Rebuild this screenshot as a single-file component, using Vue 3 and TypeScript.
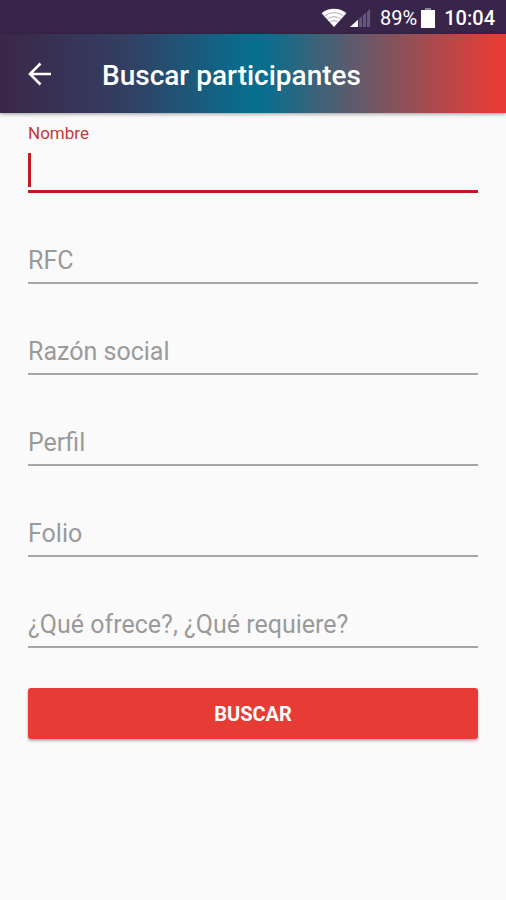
<script setup lang="ts">
import { reactive, ref } from 'vue'

interface Field {
  id: string
  label: string
}

const fields: Field[] = [
  { id: 'nombre', label: 'Nombre' },
  { id: 'rfc', label: 'RFC' },
  { id: 'razon-social', label: 'Razón social' },
  { id: 'perfil', label: 'Perfil' },
  { id: 'folio', label: 'Folio' },
  { id: 'oferta', label: '¿Qué ofrece?, ¿Qué requiere?' },
]

const values = reactive<Record<string, string>>(
  Object.fromEntries(fields.map((field) => [field.id, ''])),
)
const active = ref('nombre')
</script>

<template>
  <div class="screen">
    <div class="status">
      <svg class="wifi" viewBox="0 0 26 20" aria-hidden="true">
        <path d="M13 19 0.6 5.2C7.500-.6 18.500-.6 25.400 5.200Z" fill="#fff" />
        <path d="M3.500 8.200C9 3.600 17 3.600 22.500 8.200M6.300 11.200C10.300 7.900 15.700 7.900 19.700 11.200M9 14.200C11.500 12.200 14.500 12.200 17 14.200" fill="none" stroke="#9a93a8" stroke-width="0.8" />
      </svg>
      <svg class="signal" viewBox="0 0 22 20" aria-hidden="true">
        <path d="M1 19 21 1V19Z" fill="#65597a" />
        <path d="M1 19 9 11.800V19Z" fill="#fff" />
        <path d="M9.500 10V19M13.500 6V19M17.500 3V19" stroke="#3b2850" stroke-width="1" />
      </svg>
      <span class="percent">89%</span>
      <svg class="battery" viewBox="0 0 14 20" aria-hidden="true">
        <path d="M0 2H14V20H0Z" fill="#fff" />
        <path d="M4 0H10V2H4Z" fill="#8d849b" />
      </svg>
      <span class="clock">10:04</span>
    </div>

    <header class="bar">
      <button class="back" type="button" aria-label="Volver">
        <svg viewBox="0 0 24 24" aria-hidden="true">
          <path d="M23 12H2M12.500 1.500 2 12 12.500 22.500" fill="none" stroke="#fff" stroke-width="2.600" />
        </svg>
      </button>
      <h1>Buscar participantes</h1>
    </header>

    <form class="form" @submit.prevent>
      <div
        v-for="field in fields"
        :key="field.id"
        class="field"
        :class="{ active: active === field.id, filled: values[field.id] }"
      >
        <label :for="field.id">{{ field.label }}</label>
        <input :id="field.id" v-model="values[field.id]" type="text" autocomplete="off" @focus="active = field.id" />
        <span v-if="active === field.id && !values[field.id]" class="caret" aria-hidden="true"></span>
      </div>
      <button class="submit" type="submit">BUSCAR</button>
    </form>
  </div>
</template>

<style>
body {
  background: #fafafa;
}
</style>

<style scoped>
.screen {
  min-height: 100vh;
  background: #fafafa;
  font-family: Roboto, "Liberation Sans", sans-serif;
}

.status {
  display: flex;
  align-items: center;
  justify-content: flex-end;
  height: 34px;
  padding: 2px 11px 0 0;
  box-sizing: border-box;
  background: #392549;
  color: #fff;
  font-size: 20px;
}

.wifi {
  width: 26px;
  height: 20px;
  margin-right: 2px;
}

.signal {
  width: 22px;
  height: 20px;
  margin-right: 9px;
}

.battery {
  width: 14px;
  height: 20px;
  margin: 0 9px 0 4px;
}

.clock {
  font-weight: 500;
}

.bar {
  display: flex;
  align-items: center;
  height: 79px;
  padding: 0 28px;
  box-sizing: border-box;
  background: linear-gradient(90deg, #3b2748 0%, #333f63 25%, #086e8e 49%, #086e8e 52%, #e73c36 98%);
  box-shadow: 0 1px 4px rgba(0, 0, 0, 0.4);
}

.back {
  display: flex;
  margin: 0 50px 0 0;
  padding: 0;
  border: 0;
  background: none;
  cursor: pointer;
}

.back svg {
  width: 24px;
  height: 24px;
}

h1 {
  margin: 0;
  padding-top: 4px;
  color: #fff;
  font-size: 28px;
  line-height: 32px;
  font-weight: 500;
}

.form {
  padding: 10px 28px 28px;
}

.field {
  position: relative;
  display: grid;
  grid-template-rows: 24px 46px;
  margin-bottom: 21px;
}

label {
  grid-area: 2 / 1;
  align-self: center;
  color: #9a9a9a;
  font-size: 25px;
  line-height: 30px;
  pointer-events: none;
}

input {
  grid-area: 2 / 1;
  width: 100%;
  min-width: 0;
  box-sizing: border-box;
  padding: 0;
  border: 0;
  border-bottom: 2px solid #a6a6a6;
  border-radius: 0;
  outline: none;
  background: none;
  color: #333;
  font: inherit;
  font-size: 25px;
  caret-color: #c21b20;
}

.active label,
.filled label {
  grid-area: 1 / 1;
  align-self: start;
  font-size: 17px;
  line-height: 20px;
}

.active label {
  color: #c5383b;
}

.active input {
  border-bottom: 3px solid #be1c20;
}

.caret {
  position: absolute;
  left: 0;
  bottom: 6px;
  width: 3px;
  height: 34px;
  background: #c21b20;
  pointer-events: none;
}

.submit {
  display: block;
  width: 100%;
  height: 51px;
  margin-top: 40px;
  padding: 0;
  border: 0;
  border-radius: 3px;
  background: #e73b36;
  box-shadow: 0 2px 3px rgba(0, 0, 0, 0.3);
  color: #fff;
  font-family: inherit;
  font-size: 20px;
  font-weight: 700;
  cursor: pointer;
}
</style>
